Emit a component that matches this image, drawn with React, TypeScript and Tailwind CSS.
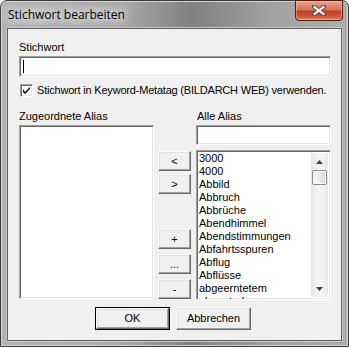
import React from 'react'

const sunken =
  'border border-t-[#a0a0a0] border-l-[#a0a0a0] border-b-white border-r-white shadow-[inset_1px_1px_0_#696969,inset_-1px_-1px_0_#e3e3e3]'

const raised =
  'border border-t-[#f8f8f8] border-l-[#f8f8f8] border-b-[#696969] border-r-[#696969] shadow-[inset_-1px_-1px_0_#a0a0a0,inset_1px_1px_0_#e3e3e3] bg-[#f0f0f0]'

const aliases = [
  '3000',
  '4000',
  'Abbild',
  'Abbruch',
  'Abbrüche',
  'Abendhimmel',
  'Abendstimmungen',
  'Abfahrtsspuren',
  'Abflug',
  'Abflüsse',
  'abgeerntetem',
  'abgestorben',
]

const SmallButton = ({ label, className = '' }: { label: string; className?: string }) => (
  <div className={`${raised} h-[20px] w-[33px] flex items-center justify-center leading-none ${className}`}>
    {label}
  </div>
)

const App = () => {
  return (
    <div className="w-[349px] h-[347px] overflow-hidden bg-white">
      <div className="w-[349px] h-[347px] flex flex-col rounded-t-[7px] border border-[#3a3a3a] bg-[linear-gradient(90deg,#b4b4b4_0%,#a9a9a9_35%,#808080_55%,#a2a2a2_78%,#acacac_100%)] shadow-[inset_0_0_0_1px_#d4d4d4]">
        {/* Title bar */}
        <div className="h-[27px] relative flex items-start">
          <span className="pl-[7px] pt-[6px] text-[12px] leading-[15px] text-black font-['Open_Sans','Noto_Sans',sans-serif] [text-shadow:0_0_8px_#f4f4f4,0_0_12px_#f4f4f4,0_0_16px_#ececec]">
            Stichwort bearbeiten
          </span>
          <div className="absolute right-[5px] top-[-1px] w-[48px] h-[21px] rounded-b-[4px] border border-[#5a1a10] bg-[linear-gradient(180deg,#eaa48e_0%,#d8735a_45%,#c23d22_55%,#cf5a3e_85%,#e88a6c_100%)] shadow-[inset_0_0_0_1px_rgba(255,200,180,0.45)] flex items-center justify-center">
            <svg width="14" height="11" viewBox="0 0 14 11">
              <path d="M2 1.5 L12 9.5 M12 1.5 L2 9.5" stroke="#4a4a4a" strokeWidth="4" strokeLinecap="square" />
              <path d="M2.5 2 L11.5 9 M11.5 2 L2.5 9" stroke="#ffffff" strokeWidth="2.2" strokeLinecap="square" />
            </svg>
          </div>
        </div>

        {/* Client area */}
        <div className="mx-[6px] mb-[5px] flex-1 border border-[#5f5f5f] bg-[#f0f0f0] shadow-[0_0_0_1px_#c8c8c8] pl-[11px] pr-[10px] pt-[12px] text-[11px] leading-[13px] text-black font-['Liberation_Sans',Arial,sans-serif]">
          <div>Stichwort</div>
          <div className={`${sunken} mt-[2px] h-[21px] w-[312px] bg-white flex items-center pl-[3px]`}>
            <div className="w-px h-[13px] bg-black" />
          </div>

          <div className="mt-[7px] flex items-center h-[13px]">
            <div className={`${sunken} ml-px w-[13px] h-[13px] shrink-0 bg-white flex items-center justify-center`}>
              <svg width="7" height="7" viewBox="0 0 7 7">
                <path d="M0 2 L0 5 L2 7 L7 2 L7 0 L2 5 Z" fill="#000" />
              </svg>
            </div>
            <span className="ml-[4px] whitespace-nowrap tracking-[-0.2px]">
              Stichwort in Keyword-Metatag (BILDARCH WEB) verwenden.
            </span>
          </div>

          <div className="mt-[13px] flex">
            <div className="w-[135px] shrink-0">
              <div>Zugeordnete Alias</div>
              <div className={`${sunken} mt-[2px] h-[174px] bg-white`} />
            </div>

            <div className="w-[33px] ml-[4px] shrink-0 flex flex-col pt-[41px]">
              <SmallButton label="<" />
              <SmallButton label=">" className="mt-[3px]" />
              <SmallButton label="+" className="mt-[35px]" />
              <SmallButton label="..." className="mt-[5px]" />
              <SmallButton label="-" className="mt-[5px]" />
            </div>

            <div className="w-[135px] ml-[5px] shrink-0">
              <div className="pl-px">Alle Alias</div>
              <div className={`${sunken} mt-[2px] h-[20px] bg-white`} />
              <div className={`${sunken} mt-[5px] h-[150px] bg-white flex overflow-hidden`}>
                <div className="flex-1 pl-[2px] pt-px overflow-hidden">
                  {aliases.map((a) => (
                    <div key={a} className="whitespace-nowrap">
                      {a}
                    </div>
                  ))}
                </div>
                <div className="w-[17px] my-[2px] mr-[2px] bg-[linear-gradient(90deg,#e6e6e6,#f3f3f3_40%,#f3f3f3_70%,#e6e6e6)] flex flex-col items-center">
                  <div className="h-[17px] flex items-center justify-center">
                    <svg width="7" height="4" viewBox="0 0 7 4">
                      <path d="M3.5 0 L7 4 L0 4 Z" fill="#404040" />
                    </svg>
                  </div>
                  <div className="w-[15px] h-[15px] rounded-[2px] border border-[#8a8a8a] bg-[linear-gradient(90deg,#f6f6f6,#ececec_50%,#d6d6d6)] shadow-[inset_0_0_0_1px_#fdfdfd]" />
                  <div className="flex-1" />
                  <div className="h-[17px] flex items-center justify-center">
                    <svg width="7" height="4" viewBox="0 0 7 4">
                      <path d="M0 0 L7 0 L3.5 4 Z" fill="#404040" />
                    </svg>
                  </div>
                </div>
              </div>
            </div>
          </div>

          <div className="mt-[7px] ml-[76px] flex gap-[6px]">
            <div className="w-[75px] h-[23px] border border-black">
              <div className={`${raised} w-full h-full flex items-center justify-center`}>OK</div>
            </div>
            <div className={`${raised} w-[75px] h-[23px] flex items-center justify-center`}>Abbrechen</div>
          </div>
        </div>
      </div>
    </div>
  )
}

export default App
